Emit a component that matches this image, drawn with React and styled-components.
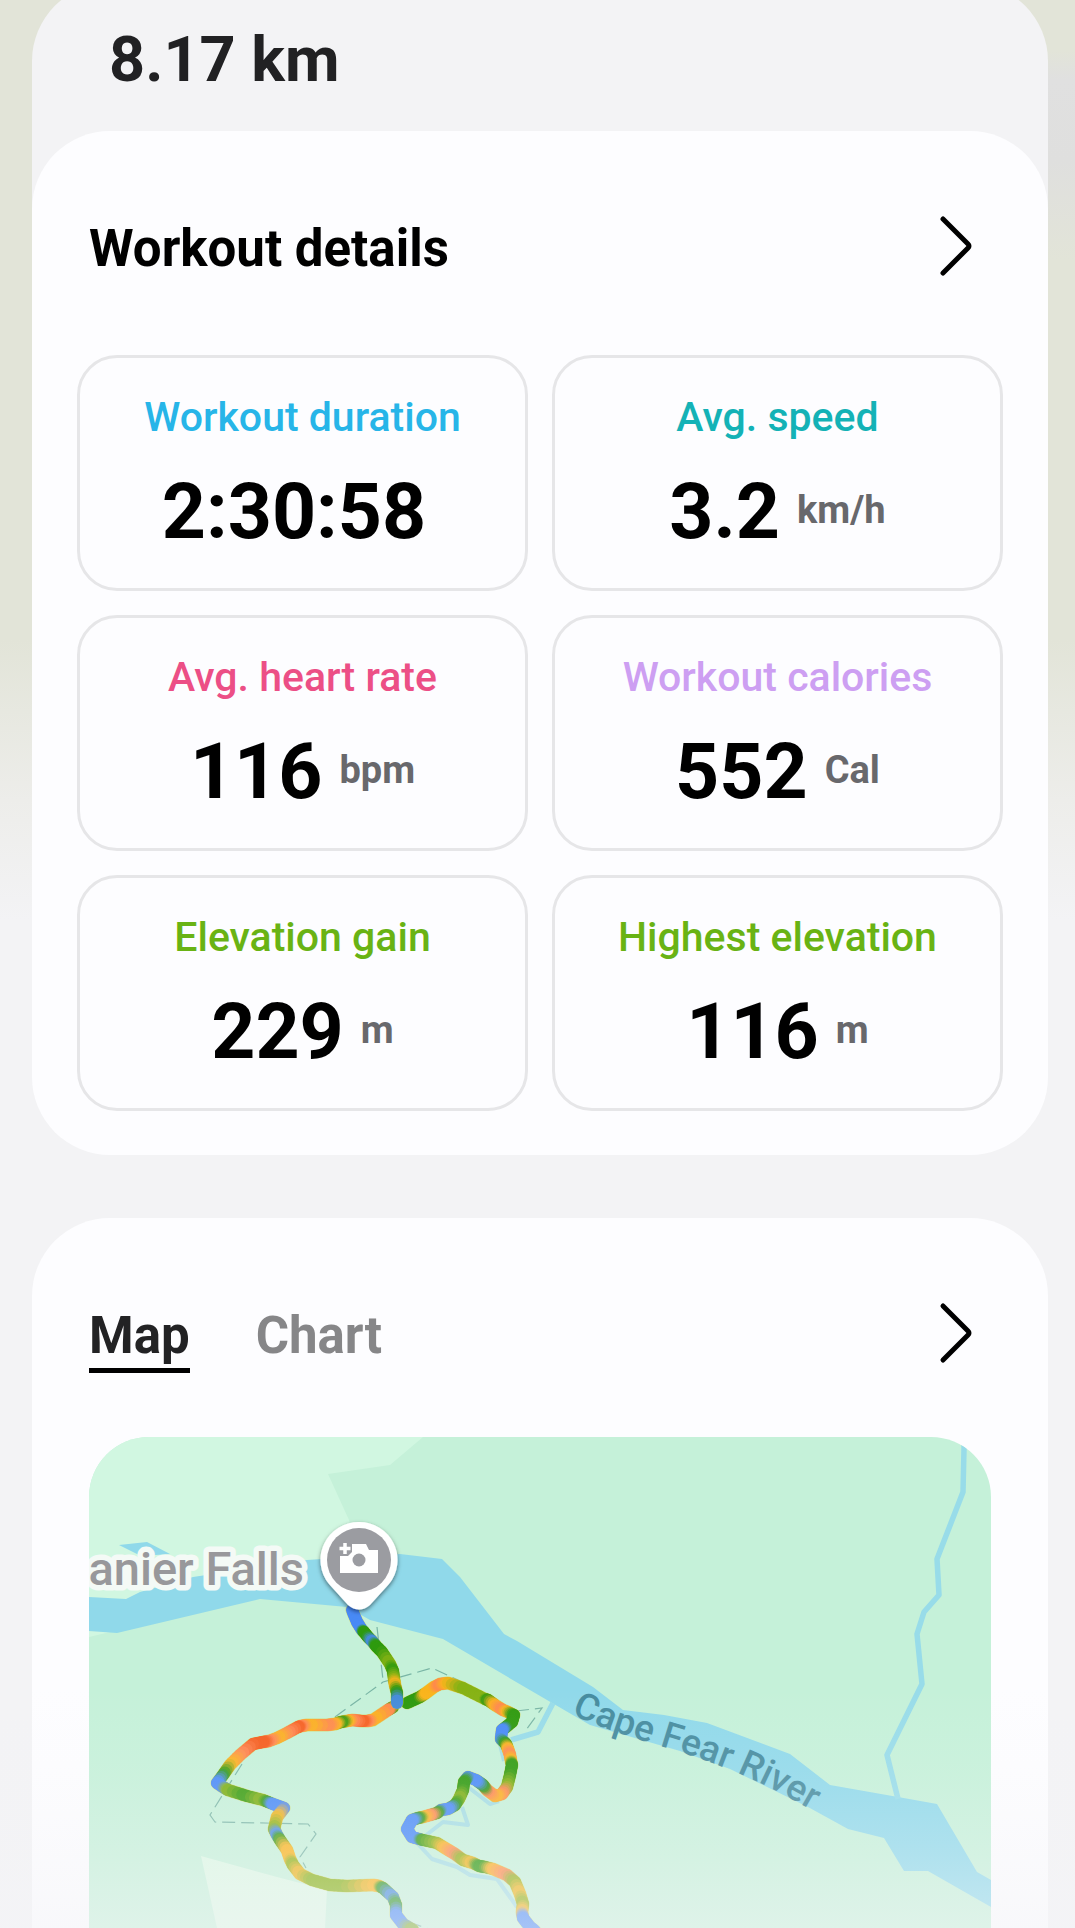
import React, { useState } from "react";
import styled, { createGlobalStyle } from "styled-components";

const GlobalStyle = createGlobalStyle`
  *, *::before, *::after { box-sizing: border-box; }
  body {
    margin: 0;
    background: #f2f2f4;
    font-family: Roboto, "Noto Sans", sans-serif;
  }
  button { font: inherit; border: 0; padding: 0; background: none; cursor: pointer; }
`;

const Page = styled.div`
  position: relative;
  min-height: 100vh;
  overflow: hidden;
  padding: 0 27px 0 32px;
  background:
    linear-gradient(rgba(222, 222, 224, 0) 50px, #e0e0e0 80px, #dfdfde 160px, rgba(222, 222, 218, 0) 260px) right top / 27px 260px no-repeat,
    linear-gradient(#e2e4d8 0, #e2e4d8 640px, #ededea 800px, #f3f3f5 920px);
`;

const Sheet = styled.main`
  margin-top: -17px;
  border-radius: 78px 78px 0 0;
  background: #f3f3f5;
`;

const Distance = styled.h1`
  margin: 0;
  padding: 40px 77px 34px;
  font-size: 63px;
  line-height: 74px;
  font-weight: 700;
  color: #212123;
`;

const Stack = styled.div`
  display: flex;
  flex-direction: column;
  gap: 63px;
`;

const Card = styled.section`
  background: #fdfdff;
  border-radius: ${(p) => (p.$open ? "78px 78px 0 0" : "78px")};
`;

const CardHeader = styled.header`
  display: flex;
  align-items: center;
  justify-content: space-between;
  padding: 87px 57px 70px;
`;

const Title = styled.h2`
  margin: 0;
  font-size: 51px;
  line-height: 62px;
  font-weight: 700;
  color: #000;
`;

const MoreButton = styled.button`
  display: block;
  width: 60px;
  height: 60px;

  svg { display: block; overflow: visible; }
`;

const StatGrid = styled.dl`
  display: grid;
  grid-template-columns: 1fr 1fr;
  gap: 24px;
  margin: 0;
  padding: 5px 45px 44px;
`;

const Stat = styled.div`
  display: flex;
  flex-direction: column;
  align-items: center;
  gap: 25px;
  padding: 35px 12px 30px;
  border: 3px solid #e6e6e8;
  border-radius: 40px;
`;

const StatLabel = styled.dt`
  font-size: 41px;
  line-height: 48px;
  font-weight: 500;
  color: ${(p) => p.$color};
`;

const StatReading = styled.dd`
  display: flex;
  align-items: center;
  gap: 17px;
  margin: 0;
  line-height: 92px;
`;

const StatValue = styled.span`
  font-size: 77px;
  font-weight: 700;
  color: #000;
`;

const StatUnit = styled.span`
  padding-bottom: 4px;
  font-size: 38px;
  line-height: 44px;
  font-weight: 700;
  color: #68686c;
`;

const Tabs = styled.div`
  display: flex;
  gap: 66px;
`;

const Tab = styled.button`
  position: relative;
  font-size: 51px;
  line-height: 62px;
  font-weight: 700;
  color: ${(p) => (p.$active ? "#222224" : "#868688")};

  &::after {
    content: "";
    position: absolute;
    left: 0;
    right: 0;
    bottom: -6px;
    height: 5px;
    background: ${(p) => (p.$active ? "#000" : "transparent")};
  }
`;

const MapFrame = styled.div`
  margin: 0 57px;
  border-radius: 60px 60px 0 0;
  overflow: hidden;

  svg { display: block; width: 100%; height: auto; }
`;

const BottomFade = styled.div`
  position: absolute;
  left: 0;
  right: 0;
  bottom: 0;
  height: 240px;
  pointer-events: none;
  background: linear-gradient(
    rgba(244, 244, 247, 0),
    rgba(244, 244, 247, 0.12) 35%,
    rgba(244, 244, 247, 0.32) 70%,
    rgba(244, 244, 247, 0.54)
  );
`;

const stats = [
  { label: "Workout duration", value: "2:30:58", unit: "", color: "#27b5e8" },
  { label: "Avg. speed", value: "3.2", unit: "km/h", color: "#14b2b6" },
  { label: "Avg. heart rate", value: "116", unit: "bpm", color: "#ec4f86" },
  { label: "Workout calories", value: "552", unit: "Cal", color: "#cd9ff2" },
  { label: "Elevation gain", value: "229", unit: "m", color: "#69b314" },
  { label: "Highest elevation", value: "116", unit: "m", color: "#69b314" },
];

/* Pace colours, slowest (b) to fastest (r). */
const pace = {
  b: [72, 138, 246],
  g: [46, 154, 14],
  l: [134, 178, 20],
  y: [250, 180, 28],
  o: [255, 134, 80],
  r: [245, 92, 28],
};

const tracks = [
  "304,270,g 299,273,o 284,283,y 278,284,o 273,284,r 263,283,o 258,284,y 252,285,g 246,287,y 238,288,o 218,288,y 212,289,o 209,290,r 198,296,o 188,301,y 180,304,o 174,305,r 164,307,r 151,318,o 141,328,y 134,338,g 128,346,b 134,350,b 139,353,l 158,359,g 174,363,l 179,365,g 184,367,b 195,371,b 188,380,y 185,392,l 188,398,b 191,403,g 198,413,y 201,422,y 204,428,l 211,437,y 223,443,l 241,448,l 258,449,l 284,448,y 290,449,y 294,451,g 304,460,b 307,468,g 307,478,b 314,487,b 324,493,l",
  "318,266,g 331,260,g 337,256,y 345,250,y 351,247,o 359,246,y 374,251,l 396,262,l 399,263,g 406,268,y 414,273,o 419,275,y 425,278,g 423,285,g 417,290,g 413,293,b 412,302,b 417,307,g 419,312,y 421,318,o 422,324,y 423,328,g 421,338,g 418,350,l 413,357,o 406,359,y 398,353,o 394,348,g 387,343,b 379,340,b 375,345,g 374,353,g 370,362,l 366,368,g 359,372,b 352,373,b 348,376,g 341,378,o 334,380,y 329,381,g 323,383,b 318,392,b 323,400,b 330,402,b 334,403,g 348,406,l 356,411,y 366,417,o 374,423,l 384,426,y 390,429,g 396,430,g 404,432,y 418,438,o 426,445,l 431,457,y 434,467,l 433,475,y 434,481,b 441,490,b 446,494,b",
  "263,173,b 268,185,b 273,193,b 275,195,g 279,200,g 284,205,b 287,209,g 293,215,g 301,227,l 304,234,g 305,242,l 306,248,y 308,256,g 308,266,b",
].map((line) =>
  line.split(" ").map((entry) => {
    const [x, y, key] = entry.split(",");
    return { x: Number(x), y: Number(y), rgb: pace[key] };
  })
);

const STEPS = 4;
const mix = (a, b, t) => a + (b - a) * t;

function Track({ points }) {
  const pieces = [];
  points.slice(1).forEach((to, i) => {
    const from = points[i];
    for (let s = 0; s < STEPS; s += 1) {
      const t = s / STEPS;
      const u = (s + 1) / STEPS;
      const rgb = from.rgb.map((c, k) => Math.round(mix(c, to.rgb[k], (t + u) / 2)));
      pieces.push(
        <line
          key={`${i}-${s}`}
          x1={mix(from.x, to.x, t)}
          y1={mix(from.y, to.y, t)}
          x2={mix(from.x, to.x, u)}
          y2={mix(from.y, to.y, u)}
          stroke={`rgb(${rgb.join(",")})`}
        />
      );
    }
  });
  return (
    <g fill="none" strokeLinecap="round" strokeLinejoin="round">
      <polyline
        points={points.map((p) => `${p.x},${p.y}`).join(" ")}
        stroke="#d8cf3c"
        strokeOpacity="0.6"
        strokeWidth="13"
      />
      <g strokeWidth="12">{pieces}</g>
    </g>
  );
}

function RouteMap() {
  return (
    <svg viewBox="0 0 902 491" role="img" aria-label="Route map">
      <defs>
        <filter id="pinShadow" x="-30%" y="-30%" width="160%" height="160%">
          <feDropShadow dx="0" dy="2" stdDeviation="2" floodColor="#000" floodOpacity="0.5" />
        </filter>
        <path id="riverLine" d="M482 277 C520 295 560 305 600 318 S684 349 740 384" />
      </defs>

      <rect width="902" height="491" fill="#c5f1d9" />
      <path d="M0 0H334L301 28L239 37L260 83L275 130L170 160L0 200Z" fill="#d1f7e1" />
      <path d="M112 419L188 440L238 453L236 491H128Z" fill="#dcf8e4" />

      <g fill="#90d9ea">
        <path d="M30 108L58 105L81 117L52 119Z" />
        <path d="M0 160L37 162L51 155L104 140L218 123L311 117L353 122L371 140L415 197L428 204L504 250L534 273L575 278L618 286L701 317L741 348L809 360L848 367L888 435L902 443V470L839 434L815 434L795 401L759 392L719 370L641 332L591 314L501 288L458 263L354 202L281 183L258 170L171 162L28 196L0 194Z" />
      </g>
      <g fill="none" stroke="#98dce9" strokeWidth="5.5" strokeLinejoin="round">
        <path d="M875 0V12L874 55L848 122L850 158L835 175L828 197L833 247L798 318L809 362" />
        <path d="M464 266L449 295L422 303" />
      </g>
      <g fill="none" stroke="#98d6e6" strokeOpacity="0.75" strokeWidth="4" strokeLinejoin="round">
        <path d="M411 307L415 324" />
        <path d="M379 350L401 367L410 364" />
        <path d="M336 399L354 385L379 388L373 370" />
        <path d="M329 407L343 422L368 430L381 438L408 442L428 470" />
      </g>
      <g fill="none" stroke="#79b5a5" strokeWidth="1.2" strokeDasharray="13 6">
        <path d="M288 190L294 243" />
        <path d="M246 280L294 245L343 231L371 244" />
        <path d="M153 327L121 378L126 385L219 387L227 397L211 420L217 431" />
        <path d="M427 274L453 271L437 293" />
        <path d="M320 485L345 494" />
      </g>

      {tracks.map((points, i) => (
        <Track key={i} points={points} />
      ))}

      <text
        x="215"
        y="148"
        textAnchor="end"
        fontSize="47"
        fontWeight="500"
        fill="#98989b"
        stroke="#f4faf6"
        strokeWidth="11"
        strokeLinejoin="round"
        paintOrder="stroke"
      >
        anier Falls
      </text>
      <text fontSize="37" fontWeight="500" fill="#468c9f">
        <textPath href="#riverLine">Cape Fear River</textPath>
      </text>

      <g>
        <path
          d="M270 85A38 38 0 0 1 300 147L281 168Q270 177 259 168L240 147A38 38 0 0 1 270 85Z"
          fill="#fff"
          filter="url(#pinShadow)"
        />
        <circle cx="270" cy="123" r="32" fill="#9b9ca1" />
        <path d="M263 107H277L280 113H289V136H251V119H259L263 115Z" fill="#fff" />
        <circle cx="270" cy="123" r="6.500" fill="#9b9ca1" />
        <path d="M256 107V117M251 112H261" stroke="#9b9ca1" strokeWidth="7" />
        <path d="M256 106V117M250.500 111.500H261.500" stroke="#fff" strokeWidth="3.500" />
      </g>
    </svg>
  );
}

function More({ label }) {
  return (
    <MoreButton type="button" aria-label={label}>
      <svg width="60" height="60" viewBox="0 0 60 60" aria-hidden="true">
        <path
          d="M12 0L37 25Q39 27 37 29L12 54"
          fill="none"
          stroke="#000"
          strokeWidth="5"
          strokeLinecap="round"
          strokeLinejoin="round"
        />
      </svg>
    </MoreButton>
  );
}

export default function App() {
  const [tab, setTab] = useState("Map");

  return (
    <Page>
      <GlobalStyle />
      <Sheet>
        <Distance>8.17 km</Distance>
        <Stack>
          <Card>
            <CardHeader>
              <Title>Workout details</Title>
              <More label="Open workout details" />
            </CardHeader>
            <StatGrid>
              {stats.map((s) => (
                <Stat key={s.label}>
                  <StatLabel $color={s.color}>{s.label}</StatLabel>
                  <StatReading>
                    <StatValue>{s.value}</StatValue>
                    <StatUnit>{s.unit}</StatUnit>
                  </StatReading>
                </Stat>
              ))}
            </StatGrid>
          </Card>
          <Card $open>
            <CardHeader>
              <Tabs role="tablist">
                {["Map", "Chart"].map((name) => (
                  <Tab
                    key={name}
                    type="button"
                    role="tab"
                    aria-selected={tab === name}
                    $active={tab === name}
                    onClick={() => setTab(name)}
                  >
                    {name}
                  </Tab>
                ))}
              </Tabs>
              <More label="Open map" />
            </CardHeader>
            <MapFrame>
              <RouteMap />
            </MapFrame>
          </Card>
        </Stack>
      </Sheet>
      <BottomFade />
    </Page>
  );
}
